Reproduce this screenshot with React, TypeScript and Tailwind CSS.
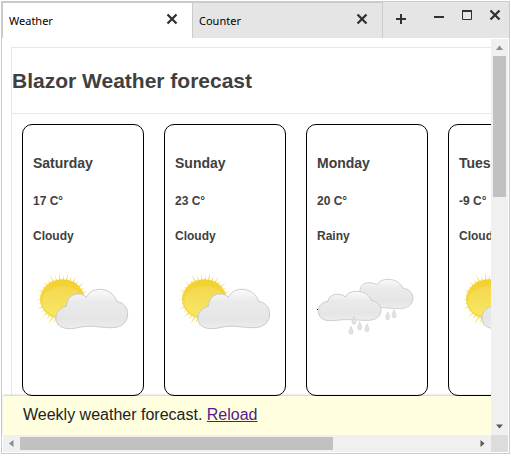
import React, { useId } from "react";

type Condition = "Cloudy" | "Rainy";
type Day = { name: string; temp: number; condition: Condition };

const days: Day[] = [
  { name: "Saturday", temp: 17, condition: "Cloudy" },
  { name: "Sunday", temp: 23, condition: "Cloudy" },
  { name: "Monday", temp: 20, condition: "Rainy" },
  { name: "Tuesday", temp: -9, condition: "Cloudy" },
];

const rays = Array.from({ length: 36 }, (_, i) => {
  const a = (i * Math.PI) / 18 + 0.03;
  const len = [86, 78, 83, 76][i % 4];
  const at = (r: number, t: number) =>
    `${(128 + 0.95 * r * Math.cos(t)).toFixed(1)},${(120 + r * Math.sin(t)).toFixed(1)}`;
  return `${at(58, a - 0.045)} ${at(len, a)} ${at(58, a + 0.045)}`;
});

function CloudFill({ id }: { id: string }) {
  return (
    <linearGradient id={id} x1="0" y1="0" x2="0" y2="1">
      <stop offset="0" stopColor="#fbfbfb" />
      <stop offset="0.3" stopColor="#ebebeb" />
      <stop offset="0.75" stopColor="#e5e5e5" />
      <stop offset="1" stopColor="#ededed" />
    </linearGradient>
  );
}

function SunCloud() {
  const id = useId();
  return (
    <svg viewBox="39 30 288 192" className="h-16 w-24" role="img" aria-label="Sun behind a cloud">
      <defs>
        <CloudFill id={id + "c"} />
        <linearGradient id={id + "s"} x1="0" y1="0" x2="0" y2="1">
          <stop offset="0" stopColor="#f3d030" />
          <stop offset="1" stopColor="#f7e04c" />
        </linearGradient>
        <linearGradient id={id + "h"} x1="0" y1="0" x2="0" y2="1">
          <stop offset="0" stopColor="#f4d84f" />
          <stop offset="1" stopColor="#f8e765" />
        </linearGradient>
      </defs>
      {rays.map((p) => (
        <polygon key={p} points={p} fill="#f6db62" />
      ))}
      <ellipse cx="127" cy="118" rx="67" ry="60" fill={`url(#${id}s)`} />
      <ellipse cx="127" cy="124" rx="60" ry="45" fill={`url(#${id}h)`} />
      <path
        d="M148 206C124 206 108 194 108 175C108 155 121 144 139 139C141 116 154 102 174 102C185 102 193 105 199 112C206 97 220 88 239 88C264 88 284 103 290 124C311 128 323 142 323 162C323 187 304 203 276 203C240 203 232 198 202 199C176 200 170 206 148 206Z"
        fill={`url(#${id}c)`}
        stroke="#cbcbcb"
        strokeWidth="3"
      />
    </svg>
  );
}

const drops = [
  [162, 169],
  [179, 185],
  [153, 199],
  [201, 191],
  [263, 155],
  [282, 149],
];

function RainClouds() {
  const id = useId();
  return (
    <svg viewBox="51 30 288 192" className="h-16 w-24 overflow-visible" role="img" aria-label="Rain clouds">
      <defs>
        <CloudFill id={id + "c"} />
      </defs>
      <path
        d="M180 95C179 78 192 68 207 68C217 68 226 70 230 75C236 64 248 58 264 58C286 58 303 69 308 84C327 87 339 98 339 114C339 134 322 146 298 146C265 146 255 141 225 144C190 147 165 140 165 118C165 104 172 96 180 95Z"
        fill={`url(#${id}c)`}
        stroke="#d0d0d0"
        strokeWidth="3"
      />
      <path
        d="M89 182C68 182 55 171 55 152C55 136 67 127 84 124C86 110 98 103 113 103C123 103 131 106 136 111C142 100 153 94 169 94C191 94 208 104 213 121C232 124 243 135 243 151C243 170 227 181 203 181C170 181 160 178 133 179C112 180 103 182 89 182Z"
        fill={`url(#${id}c)`}
        stroke="#cccccc"
        strokeWidth="3"
      />
      {drops.map(([x, y]) => (
        <path
          key={x}
          d={`M${x} ${y}C${x + 3} ${y + 8} ${x + 6} ${y + 12} ${x + 6} ${y + 18}C${x + 6} ${y + 26} ${x - 6} ${y + 26} ${x - 6} ${y + 18}C${x - 6} ${y + 12} ${x - 3} ${y + 8} ${x} ${y}Z`}
          fill="#e2e2e2"
          stroke="#d0d0d0"
          strokeWidth="2"
        />
      ))}
      <rect x="51" y="147" width="3" height="3" fill="#222222" />
    </svg>
  );
}

function Cross() {
  return (
    <svg viewBox="0 0 12 12" className="size-3" aria-hidden="true">
      <path d="M1.5 1.5L10.5 10.5M10.5 1.5L1.5 10.5" stroke="#332f35" strokeWidth="2.3" fill="none" />
    </svg>
  );
}

function Tab({ label, active = false }: { label: string; active?: boolean }) {
  return (
    <div
      className={
        "flex w-[190px] items-center justify-between border-t border-r border-[#c8cccc] pr-[14px] pl-1.5 " +
        (active ? "bg-white" : "bg-[#e5e5e5]")
      }
    >
      <button role="tab" aria-selected={active} className="text-[11px] leading-4 text-black">
        {label}
      </button>
      <button aria-label={"Close " + label} className="pb-1">
        <Cross />
      </button>
    </div>
  );
}

function Card({ day }: { day: Day }) {
  return (
    <article className="h-[272px] w-[122px] shrink-0 rounded-[10px] border border-black px-2.5 pt-[30px] font-bold text-[#404040]">
      <h2 className="text-sm leading-4">{day.name}</h2>
      <p className="mt-[23px] text-xs leading-[14px]">{day.temp} C°</p>
      <p className="mt-[21px] text-xs leading-[14px]">{day.condition}</p>
      <div className="mt-[27px]">{day.condition === "Rainy" ? <RainClouds /> : <SunCloud />}</div>
    </article>
  );
}

function Arrow({ d, color }: { d: string; color: string }) {
  return (
    <svg viewBox="0 0 17 17" className="size-[17px] shrink-0" aria-hidden="true">
      <path d={d} fill={color} />
    </svg>
  );
}

export default function App() {
  return (
    <div className="h-screen bg-white p-px pb-0.5 font-['Liberation_Sans',Arial,sans-serif]">
      <div className="flex h-full flex-col border border-[#c8cccc]">
        <header className="flex h-9 shrink-0 bg-[#e5e5e5] font-['Noto_Sans','Segoe_UI',sans-serif]">
          <div role="tablist" className="flex border-l border-[#c8cccc]">
            <Tab label="Weather" active />
            <Tab label="Counter" />
          </div>
          <button aria-label="New tab" className="ml-3 pb-0.5">
            <svg viewBox="0 0 12 12" className="size-3" aria-hidden="true">
              <path d="M6 1V11M1 6H11" stroke="#332f35" strokeWidth="2" />
            </svg>
          </button>
          <div className="ml-auto flex h-[26px] items-center gap-4 pr-2">
            <button aria-label="Minimize">
              <svg viewBox="0 0 12 12" className="size-3" aria-hidden="true">
                <path d="M1 8H11" stroke="#332f35" strokeWidth="2" />
              </svg>
            </button>
            <button aria-label="Maximize">
              <svg viewBox="0 0 12 12" className="size-3" aria-hidden="true">
                <path d="M1.5 1.5H10.5V10.5H1.5Z" stroke="#332f35" fill="none" />
                <path d="M1 1H11V3H1Z" fill="#332f35" />
              </svg>
            </button>
            <button aria-label="Close window">
              <Cross />
            </button>
          </div>
        </header>

        <div className="flex min-h-0 flex-1 px-px pt-px">
          <div className="flex min-w-0 flex-1 flex-col">
            <main className="min-h-0 flex-1 overflow-hidden pt-2 pl-2">
              <div className="border-t border-l border-[#e8e8e8]">
                <h1 className="border-b border-[#e8e8e8] py-5 text-[21px] leading-[25px] font-bold text-[#404040]">
                  Blazor Weather forecast
                </h1>
                <section className="flex gap-5 pt-2.5 pl-2.5">
                  {days.map((d) => (
                    <Card key={d.name} day={d} />
                  ))}
                </section>
              </div>
            </main>
            <footer className="h-[39px] shrink-0 bg-[#ffffe0] px-5 py-2.5 text-base leading-[18px] text-[#222222] shadow-[0_-1px_2px_rgba(0,0,0,0.2)]">
              Weekly weather forecast.{" "}
              <a href="#reload" className="text-[#551a8b] underline">
                Reload
              </a>
            </footer>
          </div>
          <div className="flex w-[17px] shrink-0 flex-col bg-[#f0f0f0]">
            <Arrow d="M5 11L8.5 6.5L12 11Z" color="#8b8b99" />
            <div className="min-h-0 flex-1 px-0.5">
              <div className="h-[39%] bg-[#c1c1c1]" />
            </div>
            <Arrow d="M5 6.5L8.5 10.5L12 6.5Z" color="#605555" />
          </div>
        </div>

        <div className="flex h-[18px] shrink-0 px-px pb-px">
          <div className="flex min-w-0 flex-1 bg-[#f0f0f0]">
            <Arrow d="M10.5 5L6 8.5L10.5 12Z" color="#8b8b99" />
            <div className="min-w-0 flex-1 py-0.5">
              <div className="h-full w-[69%] bg-[#c1c1c1]" />
            </div>
            <Arrow d="M6.5 5L10.5 8.5L6.5 12Z" color="#605555" />
          </div>
          <div className="w-[17px] bg-[#dcdcdc]" />
        </div>
      </div>
    </div>
  );
}
